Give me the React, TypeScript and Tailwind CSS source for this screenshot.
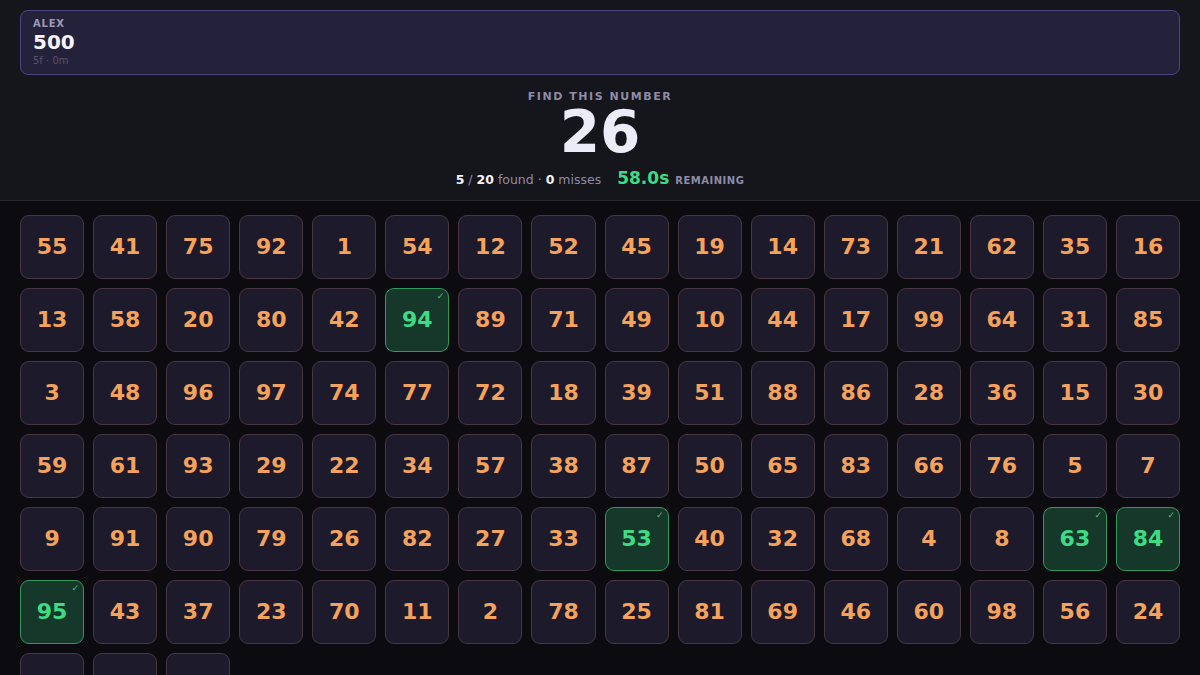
import React from "react";

const rows: number[][] = [
  [55, 41, 75, 92, 1, 54, 12, 52, 45, 19, 14, 73, 21, 62, 35, 16],
  [13, 58, 20, 80, 42, 94, 89, 71, 49, 10, 44, 17, 99, 64, 31, 85],
  [3, 48, 96, 97, 74, 77, 72, 18, 39, 51, 88, 86, 28, 36, 15, 30],
  [59, 61, 93, 29, 22, 34, 57, 38, 87, 50, 65, 83, 66, 76, 5, 7],
  [9, 91, 90, 79, 26, 82, 27, 33, 53, 40, 32, 68, 4, 8, 63, 84],
  [95, 43, 37, 23, 70, 11, 2, 78, 25, 81, 69, 46, 60, 98, 56, 24],
  [6, 47, 67],
];
const found = new Set([94, 53, 63, 84, 95]);
const nums = rows.flat();

function Tile({ n }: { n: number }) {
  const f = found.has(n);
  return (
    <div
      className={
        f
          ? "relative h-16 rounded-[9px] border border-[#2f9a5c] bg-[#15382a] flex items-center justify-center"
          : "relative h-16 rounded-[9px] border border-[#4a3640] bg-[#1d1a2c] flex items-center justify-center"
      }
    >
      <span
        className={
          f
            ? "text-[22px] font-bold text-[#3ddc84] leading-none"
            : "text-[22px] font-bold text-[#f5a25a] leading-none"
        }
      >
        {n}
      </span>
      {f && (
        <span className="absolute top-[3px] right-[4px] text-[9px] leading-none text-[#5fbf86]">
          ✓
        </span>
      )}
    </div>
  );
}

export default function App() {
  return (
    <div
      className="min-h-[675px] bg-[#0c0b10] text-white"
      style={{ fontFamily: '"DejaVu Sans", "Noto Sans", sans-serif' }}
    >
      <div className="bg-[#15151c] border-b border-[#282732] px-5 pt-[10px] pb-[8px]">
        <div className="h-[65px] rounded-lg border border-[#4a4580] bg-[#24213a] px-3 pt-[6px]">
          <div className="text-[10px] font-bold tracking-[0.08em] text-[#9c99b8] leading-[14px]">
            ALEX
          </div>
          <div className="text-[20px] font-bold text-[#f4f3fb] leading-[22px]">500</div>
          <div className="text-[10px] text-[#55536e] leading-[14px] mt-[1px]">5f · 0m</div>
        </div>
        <div className="flex flex-col items-center mt-[15px]">
          <div className="text-[11px] font-bold tracking-[0.14em] text-[#8e8ca8] leading-[14px]">
            FIND THIS NUMBER
          </div>
          <div className="text-[58px] font-bold text-[#ecebf8] leading-[54px] mt-[1px]">26</div>
          <div className="flex items-baseline gap-4 mt-[7px]">
            <div className="text-[12.5px] text-[#8e8ca8]">
              <span className="font-bold text-[#f4f3fb]">5</span> /{" "}
              <span className="font-bold text-[#f4f3fb]">20</span> found ·{" "}
              <span className="font-bold text-[#f4f3fb]">0</span> misses
            </div>
            <div className="flex items-baseline gap-[6px]">
              <span className="text-[17px] font-bold text-[#3ddc84]">58.0s</span>
              <span className="text-[10px] font-bold tracking-[0.05em] text-[#8e8ca8]">
                REMAINING
              </span>
            </div>
          </div>
        </div>
      </div>
      <div className="px-5 pt-[14px] pb-5 grid grid-cols-16 gap-[9px]">
        {nums.map((n) => (
          <Tile key={n} n={n} />
        ))}
      </div>
    </div>
  );
}
